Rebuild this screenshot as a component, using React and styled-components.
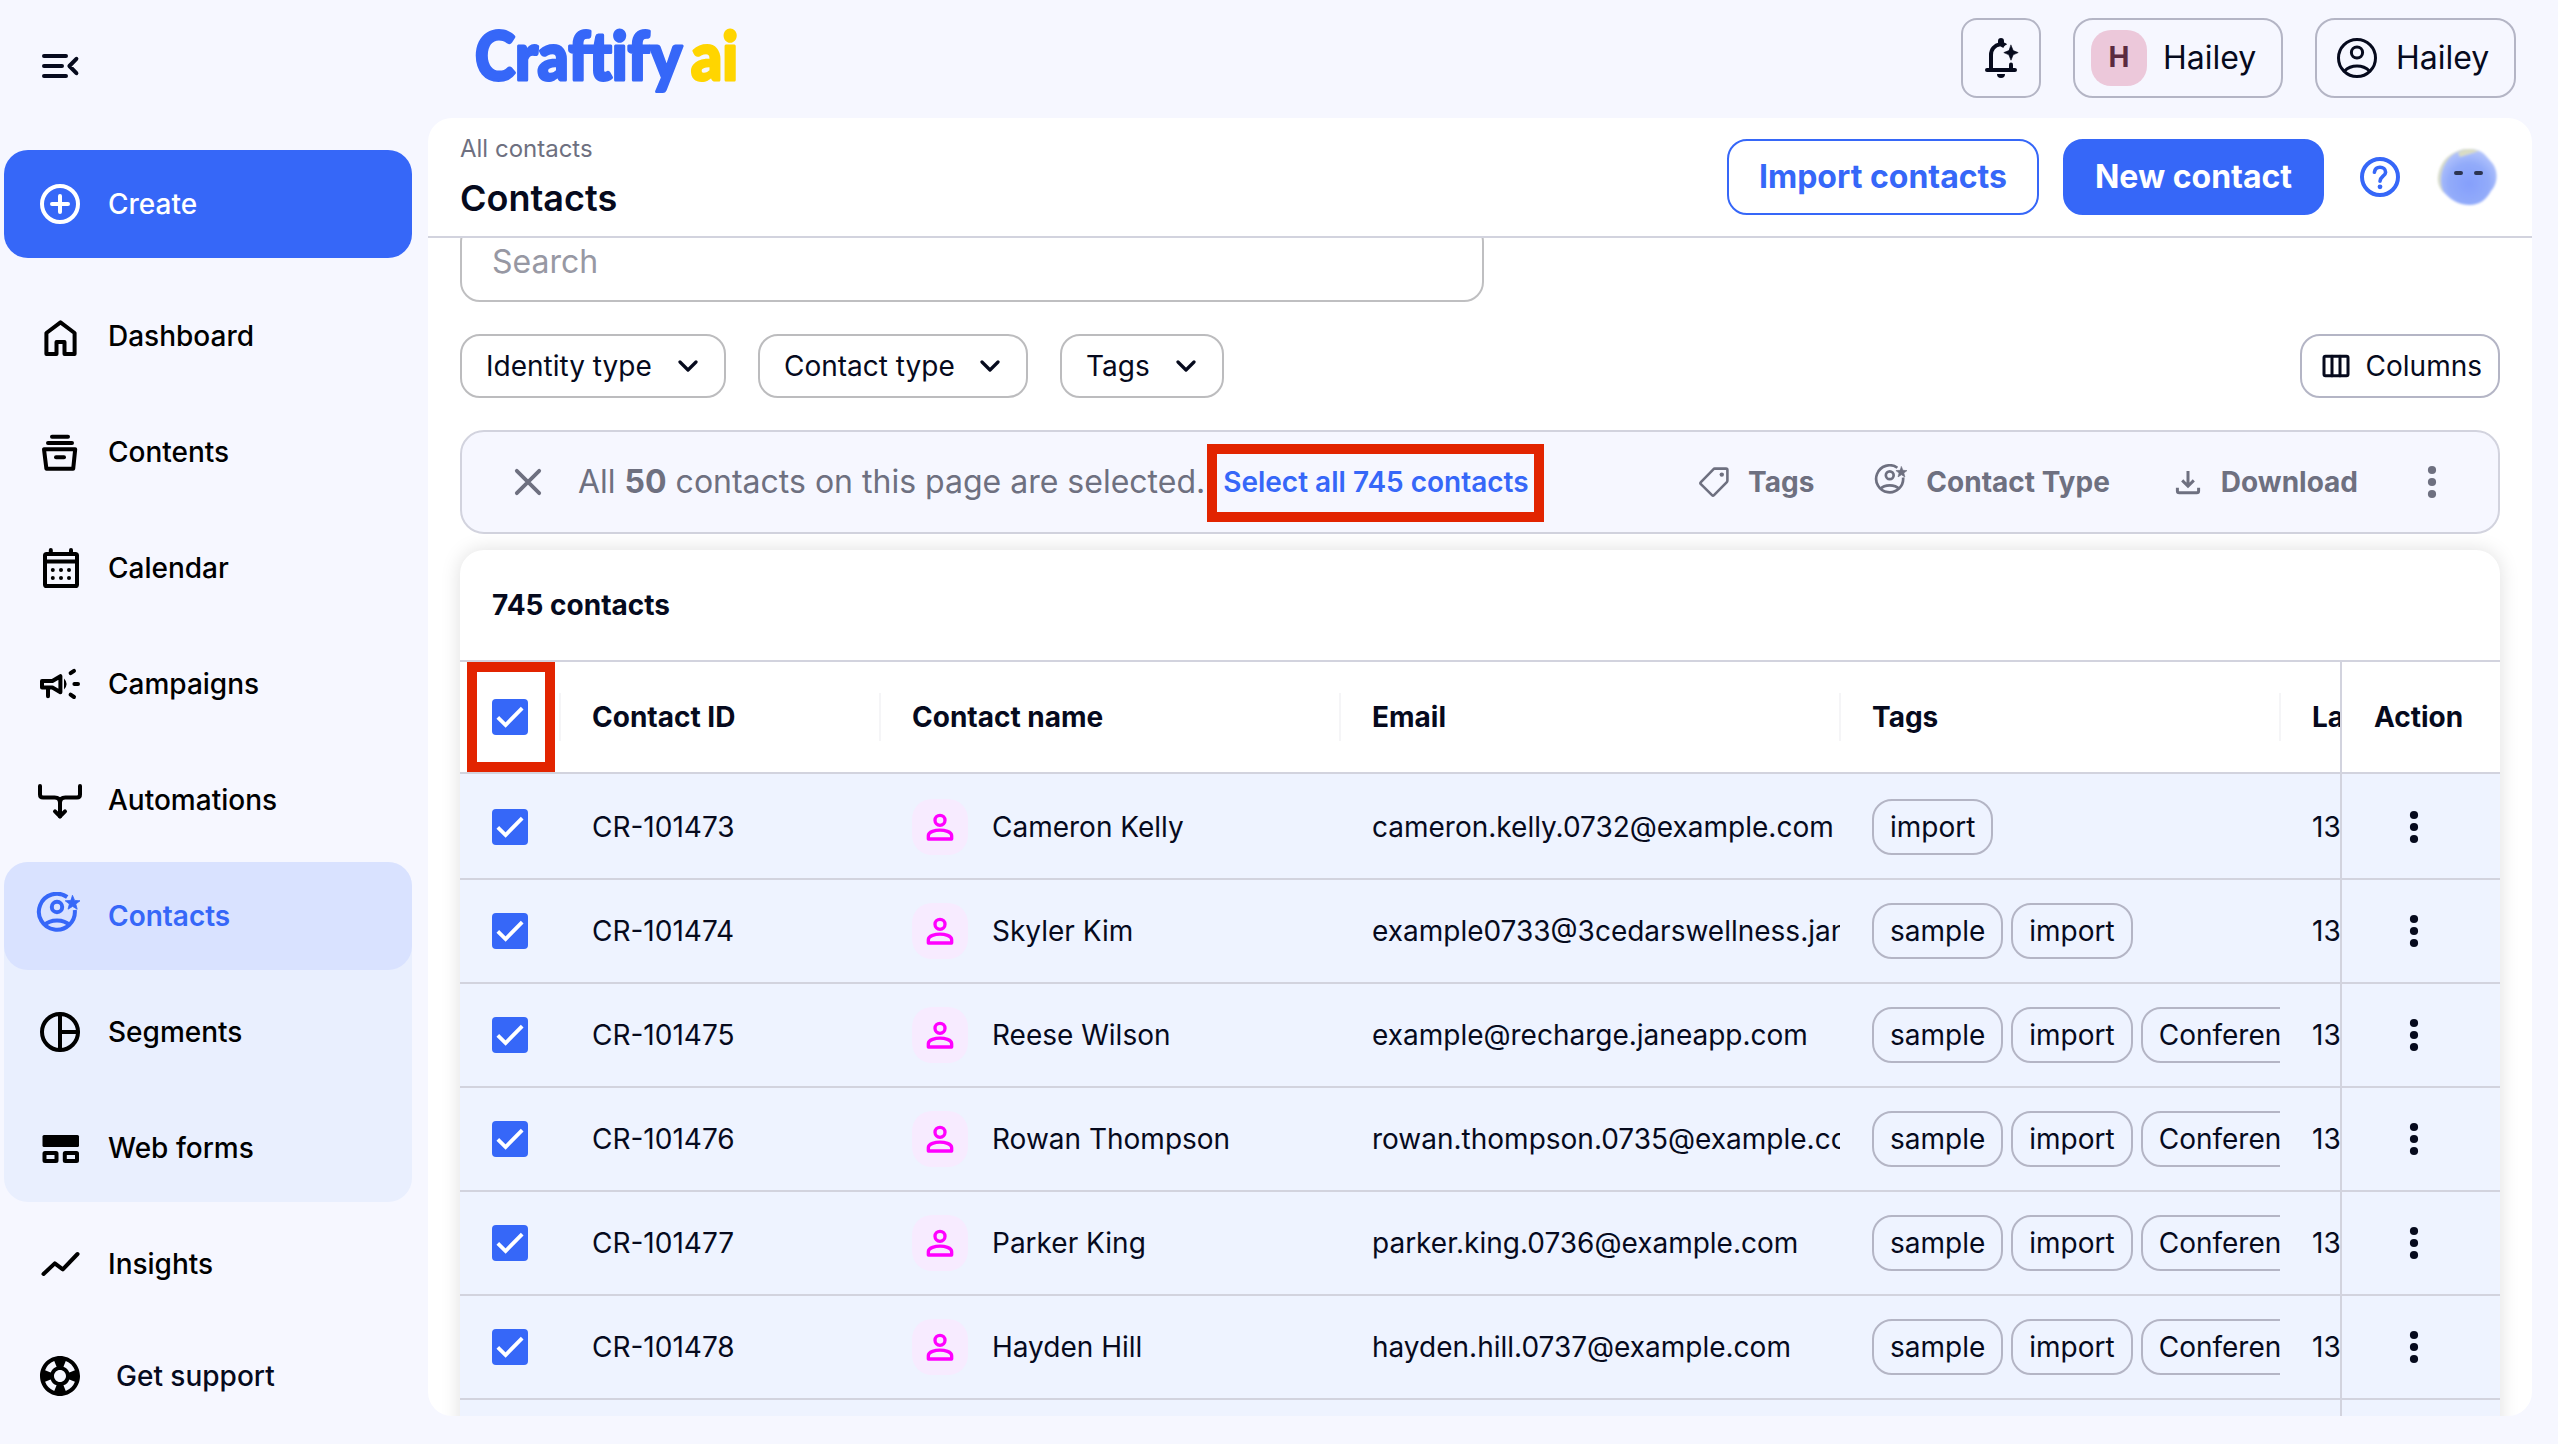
import React, {useState} from 'react';
import styled, {createGlobalStyle, css} from 'styled-components';
import {MdSupport} from 'react-icons/md';

const colors = {
    blue: '#3667f8',
    ink: '#060a1d',
    muted: '#6e7080',
    page: '#f6f7ff',
    line: '#d2d3de',
    outline: '#b4b5c5',
    selected: '#eef3ff',
    mark: '#e22400',
};

const GlobalStyle = createGlobalStyle`
    *, *::before, *::after {
        box-sizing: border-box;
    }
    body {
        margin: 0;
        background: ${colors.page};
        color: ${colors.ink};
        font-family: Inter, "Liberation Sans", sans-serif;
        font-size: 28px;
        line-height: 36px;
    }
    button {
        font: inherit;
        color: inherit;
        background: none;
        border: 0;
        padding: 0;
        cursor: pointer;
    }
    svg {
        display: block;
        flex: none;
    }
`;

/* ---------- icons ---------- */

const Icon = ({size = 48, box = 24, weight = 2, children}) => (
    <svg width={size} height={size} viewBox={`0 0 ${box} ${box}`} fill="none"
        stroke="currentColor" strokeWidth={weight}
        strokeLinecap="round" strokeLinejoin="round">
        {children}
    </svg>
);

const MenuCloseIcon = () => (
    <Icon>
        <path d="M4 7H15M4 12H13M4 17H15M20.2 8.4L16.7 12L20.2 15.6" />
    </Icon>
);

const PlusCircleIcon = () => (
    <Icon>
        <circle cx="12" cy="12" r="9" />
        <path d="M12 8V16M8 12H16" />
    </Icon>
);

const HomeIcon = () => (
    <Icon>
        <path d="M5.2 21V10.5L12.25 5.2L19.3 10.5V21H14.25V15H10.25V21Z" />
    </Icon>
);

const ContentsIcon = () => (
    <Icon>
        <path d="M8 4.35H16M6 7.5H18" />
        <path d="M4 10.6H19.6L18.6 20.4H5.2Z" />
        <path d="M10 14.6H14" />
    </Icon>
);

const CalendarIcon = () => (
    <Icon>
        <rect x="4.5" y="5" width="16" height="16" rx="0.8" />
        <path d="M4.5 8.7H20.5M7.4 3V5M17.5 3V5" />
        <g fill="currentColor" stroke="none">
            <circle cx="8.4" cy="13" r="1" />
            <circle cx="12.5" cy="13" r="1" />
            <circle cx="16.5" cy="13" r="1" />
            <circle cx="8.4" cy="17" r="1" />
            <circle cx="12.5" cy="17" r="1" />
            <circle cx="16.5" cy="17" r="1" />
        </g>
    </Icon>
);

const CampaignIcon = () => (
    <Icon>
        <path d="M3 10.5H8.2L12.2 8.1V16.1L8.2 13.8H3Z" />
        <path d="M6 14V18.1M17.3 6.6L19 5.4M19.2 12H21M17.3 17.3L19 18.5" />
        <path d="M14 9.3Q16.6 12 14 14.8Z" fill="currentColor" stroke="none" />
    </Icon>
);

const AutomationIcon = () => (
    <Icon>
        <path d="M2 5V9.2Q2 10.7 3.5 10.7H9.3Q12 10.7 12 13.4V20.2" />
        <path d="M22 5V9.2Q22 10.7 20.5 10.7H14.7Q12 10.7 12 13.4" />
        <path d="M9.5 17.7L12 20.2L14.5 17.7" />
    </Icon>
);

const ContactStarIcon = ({size, weight}) => (
    <Icon size={size} weight={weight}>
        <path d="M15.6 2.5A9 9 0 1 0 19.4 9" strokeLinecap="butt" />
        <circle cx="10.5" cy="7.5" r="2.6" />
        <path d="M4.3 16.6C7 13.4 14 13.4 16.7 16.6" strokeLinecap="butt" />
        <path
            d="M18.3 1.8L19.3 4.2L22 4.4L19.9 6L20.6 8.6L18.3 7.2L16 8.6L16.7 6L14.6 4.4L17.3 4.2Z"
            fill="currentColor" strokeWidth="0.4" />
    </Icon>
);

const SegmentIcon = () => (
    <Icon>
        <circle cx="12" cy="12" r="9" />
        <path d="M12 3V21M12 12H21" />
    </Icon>
);

const FormsIcon = () => (
    <Icon box={48} weight={4}>
        <rect x="6.5" y="11" width="36.5" height="12" rx="1.5" fill="currentColor" stroke="none" />
        <rect x="8.5" y="29" width="12" height="8" rx="0.5" />
        <rect x="28.8" y="29" width="12.2" height="8" rx="0.5" />
    </Icon>
);

const InsightsIcon = () => (
    <Icon box={48} weight={4}>
        <path d="M7.5 34L18.8 23.4L26.8 29.4L41.5 14" />
    </Icon>
);

const BellIcon = () => (
    <Icon>
        <path d="M5 18H19M7 18V10.5C7 7.6 8.9 5.6 11.5 5.1" />
        <path d="M17 15.2V18" />
        <path d="M10.5 5.5V3.5A1.5 1.5 0 0 1 13.5 3.5V4.2Q15 4.7 15 5.2Q13.2 6 13.2 7Z"
            fill="currentColor" stroke="none" />
        <path d="M10 20H14A2 2 0 0 1 10 20Z" fill="currentColor" stroke="none" />
        <path d="M17 5.6L18.1 8.3L20.6 9.3L18.1 10.4L17 13.1L15.9 10.4L13.4 9.3L15.9 8.3Z"
            fill="currentColor" strokeWidth="0.3" />
    </Icon>
);

const AccountIcon = () => (
    <Icon size={40} box={40} weight={3}>
        <circle cx="20" cy="20" r="18.5" />
        <circle cx="20" cy="14.5" r="5.6" />
        <path d="M7.5 33Q12.5 28 20 28T32.5 33" />
    </Icon>
);

const HelpIcon = () => (
    <Icon size={40} box={40} weight={4}>
        <circle cx="20" cy="20" r="18" />
        <path d="M14.4 15.2C15 11.8 17.3 10.3 20 10.3C23.2 10.3 25.6 12.4 25.6 15.2C25.6 19 20 19.6 20 24.2"
            strokeWidth="3.6" />
        <circle cx="20" cy="29.8" r="2.4" fill="currentColor" stroke="none" />
    </Icon>
);

const ChevronIcon = () => (
    <Icon size={20} box={20} weight={3.2}>
        <path d="M2 6L10 14L18 6" />
    </Icon>
);

const ColumnsIcon = () => (
    <Icon size={28} box={28} weight={3}>
        <rect x="2" y="4.2" width="24" height="19.6" rx="1.5" />
        <path d="M10 4.2V23.8M18 4.2V23.8" />
    </Icon>
);

const CloseIcon = () => (
    <Icon size={28} box={28} weight={3.8}>
        <path d="M2.8 2.8L25.2 25.2M25.2 2.8L2.8 25.2" />
    </Icon>
);

const TagIcon = () => (
    <Icon size={32} box={32} weight={2.6}>
        <path d="M16.6 2.6H28Q29.4 2.6 29.4 4V14.6Q29.4 15.6 28.6 16.4L16 29.2Q15 30.2 14 29.2L2.9 18.2Q1.9 17.2 2.9 16.2L15.6 3.2Q16 2.6 16.6 2.6Z" />
        <circle cx="23.8" cy="8.6" r="2.2" fill="currentColor" stroke="none" />
    </Icon>
);

const DownloadIcon = () => (
    <Icon size={28} box={28} weight={3}>
        <path d="M14 3V18M8.2 12.4L14 18.2L19.8 12.4M3.4 19.8V23Q3.4 24.8 5.2 24.8H22.8Q24.6 24.8 24.6 23V19.8"
            strokeLinecap="butt" strokeLinejoin="miter" />
    </Icon>
);

const KebabIcon = () => (
    <svg width="10" height="34" viewBox="0 0 10 34" fill="currentColor">
        <circle cx="5" cy="5" r="4.1" />
        <circle cx="5" cy="17" r="4.1" />
        <circle cx="5" cy="29" r="4.1" />
    </svg>
);

const PersonIcon = () => (
    <Icon size={40}>
        <circle cx="12" cy="8" r="3" />
        <path d="M5 19.2V17.2C5 14.8 9.4 13.9 12 13.9S19 14.8 19 17.2V19.2Z" />
    </Icon>
);

const CheckIcon = () => (
    <Icon size={36} box={36} weight={3.8}>
        <path d="M5.8 18.4L13.6 26L30.2 9.2" strokeLinecap="butt" strokeLinejoin="miter" />
    </Icon>
);

const Logo = () => (
    <svg width="264" height="92" viewBox="0 0 264 92" strokeWidth="3" strokeLinejoin="round"
        fontFamily="Lato, 'Open Sans', sans-serif" fontWeight="900" fontSize="67.5">
        <text x="1" y="65.5" textLength="207" lengthAdjust="spacingAndGlyphs"
            fill={colors.blue} stroke={colors.blue}>Craftify</text>
        <text x="217" y="65.5" textLength="47" lengthAdjust="spacingAndGlyphs"
            fill="#ffd500" stroke="#ffd500">ai</text>
    </svg>
);

const Blob = () => (
    <svg width="64" height="64" viewBox="0 0 64 64">
        <defs>
            <radialGradient id="blobFill" cx="0.5" cy="0.62" r="0.6">
                <stop offset="0" stopColor="#859ffb" />
                <stop offset="0.6" stopColor="#92abfa" />
                <stop offset="1" stopColor="#b3c4fb" />
            </radialGradient>
            <filter id="blobSoft" x="-10%" y="-10%" width="120%" height="120%">
                <feGaussianBlur stdDeviation="1.2" />
            </filter>
        </defs>
        <g filter="url(#blobSoft)">
            <path d="M28 4C14 7 4 16 2 31C1 38 4 44 8 48L40 8Z" fill="#d5dac9" />
            <path d="M33 4C46 3 51 12 57 19C63 28 61 40 55 46C50 55 43 60 34 60C22 60 13 54 7 46C3 36 5 24 11 16C16 8 24 5 33 4Z"
                fill="url(#blobFill)" />
            <path d="M22 8Q31 1 43 6Q34 9 24 12Z" fill="#d9dcc4" />
        </g>
        <path d="M20 28H25M40 28H45" stroke="#2c3450" strokeWidth="4" strokeLinecap="round" />
    </svg>
);

/* ---------- shell ---------- */

const Shell = styled.div`
    display: flex;
    width: 2558px;
    height: 1444px;
    overflow: hidden;
    background: ${colors.page};
`;

const Sidebar = styled.nav`
    display: flex;
    flex-direction: column;
    flex: none;
    width: 428px;
    padding: 42px 16px 0 4px;
`;

const MenuToggle = styled.button`
    width: 48px;
    height: 48px;
    margin: 0 0 60px 32px;
`;

const NavGroup = styled.div`
    display: flex;
    flex-direction: column;
    gap: 8px;
    border-radius: 24px;
    background: ${props => props.$tinted ? '#e9effe' : 'none'};
`;

const NavButton = styled.button`
    display: flex;
    align-items: center;
    flex: none;
    gap: 24px;
    height: 108px;
    padding-left: 32px;
    border-radius: 24px;
    color: #000;
    font-weight: 500;

    ${props => props.$primary && css`
        margin-bottom: 24px;
        background: ${colors.blue};
        color: #fff;
    `}
    ${props => props.$active && css`
        background: #d9e2ff;
        color: ${colors.blue};
        font-weight: 600;
    `}
`;

const SupportButton = styled(NavButton)`
    gap: 32px;
    margin-top: 4px;
`;

const SupportLabel = styled.span`
    color: ${colors.ink};
`;

const Main = styled.div`
    display: flex;
    flex-direction: column;
    width: 2104px;
`;

const TopBar = styled.header`
    display: flex;
    align-items: flex-start;
    justify-content: space-between;
    height: 118px;
    padding: 14px 16px 0 46px;
`;

const TopActions = styled.div`
    display: flex;
    gap: 32px;
    margin-top: 4px;
`;

const TopButton = styled.button`
    display: flex;
    align-items: center;
    height: 80px;
    width: ${props => props.$width}px;
    padding-left: ${props => props.$pad}px;
    gap: ${props => props.$gap || 0}px;
    border: 2px solid ${colors.outline};
    border-radius: ${props => props.$square ? '16px' : '20px'};
    font-size: 32px;
    line-height: 1.2;
`;

const Initial = styled.span`
    display: flex;
    align-items: center;
    justify-content: center;
    width: 56px;
    height: 56px;
    border-radius: 20px;
    background: #ecc8da;
    color: #5b2a40;
    font-size: 28px;
    font-weight: 700;
`;

const Panel = styled.main`
    display: flex;
    flex-direction: column;
    height: 1298px;
    border-radius: 24px;
    background: #fff;
    overflow: hidden;
`;

const PanelHeader = styled.div`
    display: flex;
    align-items: center;
    flex: none;
    height: 120px;
    padding: 0 32px;
    border-bottom: 2px solid ${colors.line};
`;

const Titles = styled.div`
    flex: 1;
    margin-top: 1px;
`;

const Crumb = styled.div`
    height: 36px;
    font-size: 24px;
    color: ${colors.muted};
`;

const Title = styled.h1`
    margin: 5px 0 0;
    height: 52px;
    line-height: 52px;
    font-size: 36px;
    font-weight: 600;
`;

const ActionButton = styled.button`
    height: 76px;
    width: ${props => props.$width}px;
    margin-right: ${props => props.$after}px;
    border: 2px solid ${colors.blue};
    border-radius: 20px;
    background: ${props => props.$filled ? colors.blue : '#fff'};
    color: ${props => props.$filled ? '#fff' : colors.blue};
    font-size: 32px;
    line-height: 1.2;
    font-weight: 700;
`;

const HelpButton = styled.button`
    margin-right: 36px;
    color: ${colors.blue};
`;

const PanelBody = styled.div`
    display: flex;
    flex-direction: column;
    flex: 1;
    min-height: 0;
    padding: 0 32px;
    overflow: hidden;
`;

const SearchBox = styled.div`
    display: flex;
    align-items: center;
    flex: none;
    width: 1024px;
    height: 80px;
    margin-top: -16px;
    padding-left: 30px;
    border: 2px solid #bfbfc1;
    border-radius: 20px;
    color: #9798a3;
    font-size: 32px;
    line-height: 1.2;
`;

const FilterRow = styled.div`
    display: flex;
    flex: none;
    gap: 32px;
    margin-top: 32px;
`;

const FilterButton = styled.button`
    display: flex;
    align-items: center;
    justify-content: space-between;
    height: 64px;
    width: ${props => props.$width}px;
    padding: 0 26px 0 24px;
    border: 2px solid #bcbcbe;
    border-radius: 20px;
`;

const ColumnsButton = styled(FilterButton)`
    margin-left: auto;
    padding: 0 16px 0 20px;
    border-color: ${colors.outline};
`;

const SelectionBar = styled.div`
    display: flex;
    align-items: center;
    flex: none;
    height: 104px;
    margin-top: 32px;
    padding: 0 61px 0 52px;
    border: 2px solid ${colors.line};
    border-radius: 24px;
    background: ${colors.page};
    color: ${colors.muted};
`;

const SelectionText = styled.span`
    margin: 0 18px 0 36px;
    font-size: 32px;
    line-height: 1.2;
    white-space: nowrap;

    b {
        font-weight: 700;
    }
`;

const SelectAll = styled.button`
    position: relative;
    color: ${colors.blue};
    font-weight: 600;
    white-space: nowrap;
`;

const Mark = styled.span`
    position: absolute;
    border: 10px solid ${colors.mark};
    pointer-events: none;
    z-index: 2;
`;

const LinkMark = styled(Mark)`
    inset: -20px -15px -22px -16px;
`;

const CheckMark = styled(Mark)`
    top: 0;
    left: 7px;
    width: 88px;
    height: 110px;
`;

const BulkActions = styled.div`
    display: flex;
    align-items: center;
    margin-left: auto;
`;

const BulkButton = styled.button`
    display: flex;
    align-items: center;
    gap: ${props => props.$gap}px;
    margin-right: ${props => props.$after}px;
    font-weight: 700;
`;

/* ---------- table ---------- */

const TableCard = styled.section`
    flex: none;
    margin-top: 16px;
    border-radius: 24px 24px 0 0;
    background: #fff;
    box-shadow: 0 0 20px rgba(0, 0, 0, 0.13);
`;

const TableTitle = styled.div`
    display: flex;
    align-items: center;
    height: 112px;
    padding-left: 32px;
    border-bottom: 2px solid ${colors.line};
    font-weight: 700;
`;

const Row = styled.div`
    display: grid;
    grid-template-columns: 100px 320px 460px 500px 440px 60px 160px;
    position: relative;
    height: ${props => props.$height}px;
    padding-top: ${props => props.$top || 0}px;
    border-bottom: 2px solid ${colors.line};
    background: ${props => props.$head ? '#fff' : colors.selected};
    font-weight: ${props => props.$head ? 700 : 400};
`;

const Cell = styled.div`
    display: flex;
    align-items: center;
    min-width: 0;
    padding-left: 32px;
    overflow: hidden;
    white-space: nowrap;
`;

const HeadCell = styled(Cell)`
    position: relative;
    overflow: visible;

    &::after {
        content: "";
        position: absolute;
        top: 31px;
        right: -1px;
        width: 2px;
        height: 48px;
        background: #f5f5f7;
    }
`;

const ActionCell = styled(Cell)`
    border-left: 2px solid ${colors.line};
    padding-left: ${props => props.$kebab ? '67px' : '32px'};
    margin-top: -${props => props.$top || 0}px;
    padding-top: ${props => props.$top || 0}px;
`;

const CheckBox = styled.button`
    width: 36px;
    height: 36px;
    border-radius: 4px;
    background: ${colors.blue};
    color: #fff;
`;

const PersonBadge = styled.span`
    display: flex;
    align-items: center;
    justify-content: center;
    flex: none;
    width: 56px;
    height: 56px;
    margin-right: 24px;
    border-radius: 20px;
    background: #f7ebff;
    color: #ff00ff;
`;

const TagList = styled.div`
    display: flex;
    gap: 8px;
`;

const Tag = styled.span`
    display: flex;
    align-items: center;
    height: 56px;
    padding: 0 16px;
    border: 2px solid ${colors.outline};
    border-radius: 20px;
`;

const mainNav = [
    {label: 'Dashboard', icon: <HomeIcon />},
    {label: 'Contents', icon: <ContentsIcon />},
    {label: 'Calendar', icon: <CalendarIcon />},
    {label: 'Campaigns', icon: <CampaignIcon />},
    {label: 'Automations', icon: <AutomationIcon />},
];

const contactNav = [
    {label: 'Contacts', icon: <ContactStarIcon />},
    {label: 'Segments', icon: <SegmentIcon />},
    {label: 'Web forms', icon: <FormsIcon />},
];

const filters = [
    {label: 'Identity type', width: 266},
    {label: 'Contact type', width: 270},
    {label: 'Tags', width: 164},
];

const allTags = ['sample', 'import', 'Conference'];

const contacts = [
    {id: 'CR-101473', name: 'Cameron Kelly', email: 'cameron.kelly.0732@example.com', tags: ['import']},
    {id: 'CR-101474', name: 'Skyler Kim', email: 'example0733@3cedarswellness.jan', tags: ['sample', 'import']},
    {id: 'CR-101475', name: 'Reese Wilson', email: 'example@recharge.janeapp.com', tags: allTags},
    {id: 'CR-101476', name: 'Rowan Thompson', email: 'rowan.thompson.0735@example.com', tags: allTags},
    {id: 'CR-101477', name: 'Parker King', email: 'parker.king.0736@example.com', tags: allTags},
    {id: 'CR-101478', name: 'Hayden Hill', email: 'hayden.hill.0737@example.com', tags: allTags},
];

const SideNav = ({active, onSelect}) => (
    <Sidebar>
        <MenuToggle><MenuCloseIcon /></MenuToggle>
        <NavButton $primary><PlusCircleIcon />Create</NavButton>
        <NavGroup>
            {mainNav.map(item => (
                <NavButton key={item.label} onClick={() => onSelect(item.label)}>
                    {item.icon}{item.label}
                </NavButton>
            ))}
            <NavGroup $tinted>
                {contactNav.map(item => (
                    <NavButton key={item.label}
                        $active={item.label === active}
                        onClick={() => onSelect(item.label)}>
                        {item.icon}{item.label}
                    </NavButton>
                ))}
            </NavGroup>
            <NavButton><InsightsIcon />Insights</NavButton>
        </NavGroup>
        <SupportButton>
            <MdSupport size={48} />
            <SupportLabel>Get support</SupportLabel>
        </SupportButton>
    </Sidebar>
);

const ContactRow = ({contact, first}) => (
    <Row $height={first ? 106 : 104} $top={first ? 2 : 0}>
        <Cell><CheckBox><CheckIcon /></CheckBox></Cell>
        <Cell>{contact.id}</Cell>
        <Cell>
            <PersonBadge><PersonIcon /></PersonBadge>
            {contact.name}
        </Cell>
        <Cell>{contact.email}</Cell>
        <Cell>
            <TagList>
                {contact.tags.map(tag => <Tag key={tag}>{tag}</Tag>)}
            </TagList>
        </Cell>
        <Cell>13</Cell>
        <ActionCell $kebab $top={first ? 2 : 0}><KebabIcon /></ActionCell>
    </Row>
);

const ContactsTable = () => (
    <TableCard>
        <TableTitle>745 contacts</TableTitle>
        <Row $head $height={112}>
            <HeadCell><CheckBox><CheckIcon /></CheckBox></HeadCell>
            <HeadCell>Contact ID</HeadCell>
            <HeadCell>Contact name</HeadCell>
            <HeadCell>Email</HeadCell>
            <HeadCell>Tags</HeadCell>
            <Cell>La</Cell>
            <ActionCell>Action</ActionCell>
            <CheckMark />
        </Row>
        {contacts.map((contact, index) => (
            <ContactRow key={contact.id} contact={contact} first={index === 0} />
        ))}
        <Row $height={104}>
            <Cell /><Cell /><Cell /><Cell /><Cell /><Cell />
            <ActionCell />
        </Row>
    </TableCard>
);

const App = () => {
    const [active, setActive] = useState('Contacts');

    return (
        <Shell>
            <GlobalStyle />
            <SideNav active={active} onSelect={setActive} />
            <Main>
                <TopBar>
                    <Logo />
                    <TopActions>
                        <TopButton $square $width={80} $pad={14}><BellIcon /></TopButton>
                        <TopButton $width={210} $pad={16} $gap={16}>
                            <Initial>H</Initial>Hailey
                        </TopButton>
                        <TopButton $width={201} $pad={20} $gap={19}>
                            <AccountIcon />Hailey
                        </TopButton>
                    </TopActions>
                </TopBar>
                <Panel>
                    <PanelHeader>
                        <Titles>
                            <Crumb>All contacts</Crumb>
                            <Title>Contacts</Title>
                        </Titles>
                        <ActionButton $width={312} $after={24}>Import contacts</ActionButton>
                        <ActionButton $filled $width={261} $after={36}>New contact</ActionButton>
                        <HelpButton><HelpIcon /></HelpButton>
                        <Blob />
                    </PanelHeader>
                    <PanelBody>
                        <SearchBox>Search</SearchBox>
                        <FilterRow>
                            {filters.map(filter => (
                                <FilterButton key={filter.label} $width={filter.width}>
                                    {filter.label}<ChevronIcon />
                                </FilterButton>
                            ))}
                            <ColumnsButton $width={200}><ColumnsIcon />Columns</ColumnsButton>
                        </FilterRow>
                        <SelectionBar>
                            <CloseIcon />
                            <SelectionText>
                                All <b>50</b> contacts on this page are selected.
                            </SelectionText>
                            <SelectAll>
                                Select all 745 contacts
                                <LinkMark />
                            </SelectAll>
                            <BulkActions>
                                <BulkButton $gap={18} $after={60}><TagIcon />Tags</BulkButton>
                                <BulkButton $gap={16} $after={64}>
                                    <ContactStarIcon size={36} weight={1.8} />Contact Type
                                </BulkButton>
                                <BulkButton $gap={19} $after={69}><DownloadIcon />Download</BulkButton>
                                <KebabIcon />
                            </BulkActions>
                        </SelectionBar>
                        <ContactsTable />
                    </PanelBody>
                </Panel>
            </Main>
        </Shell>
    );
};

export default App;
